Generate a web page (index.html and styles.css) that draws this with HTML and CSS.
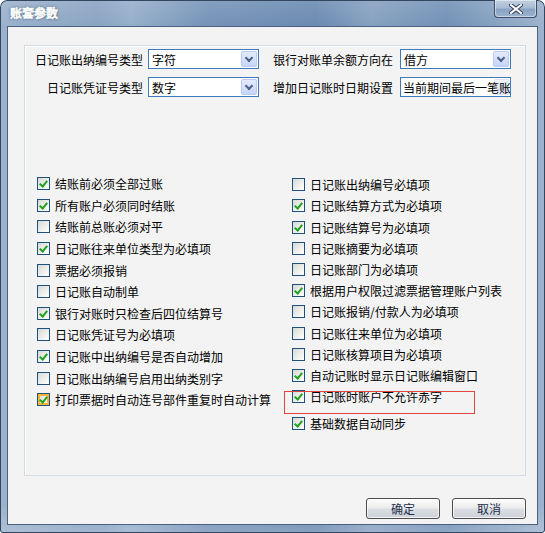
FILE: index.html
```html
<!DOCTYPE html>
<html lang="zh-CN">
<head>
    <meta charset="UTF-8">
    <title>账套参数</title>
    <link rel="stylesheet" href="styles.css">
</head>
<body>

    <!-- Dialog window -->
    <div class="window">
        <div class="titlebar">
            <span class="title">账套参数</span>
            <button class="close-btn">
                <svg width="14" height="10" viewBox="0 0 14 10">
                    <path d="M2 1 L12 9 M12 1 L2 9" stroke="#33445c" stroke-width="4" stroke-linecap="square"/>
                    <path d="M2 1 L12 9 M12 1 L2 9" stroke="#fff" stroke-width="2" stroke-linecap="square"/>
                </svg>
            </button>
        </div>

        <div class="client">
            <div class="group">
                <!-- Combo fields -->
                <div class="fields">
                    <label>日记账出纳编号类型</label>
                    <div class="combo"><span>字符</span><i class="drop"></i></div>
                    <label class="lbl-right">银行对账单余额方向在</label>
                    <div class="combo"><span>借方</span><i class="drop"></i></div>

                    <label>日记账凭证号类型</label>
                    <div class="combo"><span>数字</span><i class="drop"></i></div>
                    <label class="lbl-right">增加日记账时日期设置</label>
                    <div class="combo wide"><span>当前期间最后一笔账</span><i class="drop"></i></div>
                </div>

                <!-- Options -->
                <div class="checks">
                    <div class="col col-left">
                        <div class="chk"><i class="box on"></i>结账前必须全部过账</div>
                        <div class="chk"><i class="box on"></i>所有账户必须同时结账</div>
                        <div class="chk"><i class="box"></i>结账前总账必须对平</div>
                        <div class="chk"><i class="box on"></i>日记账往来单位类型为必填项</div>
                        <div class="chk"><i class="box"></i>票据必须报销</div>
                        <div class="chk"><i class="box"></i>日记账自动制单</div>
                        <div class="chk"><i class="box on"></i>银行对账时只检查后四位结算号</div>
                        <div class="chk"><i class="box"></i>日记账凭证号为必填项</div>
                        <div class="chk"><i class="box on"></i>日记账中出纳编号是否自动增加</div>
                        <div class="chk"><i class="box"></i>日记账出纳编号启用出纳类别字</div>
                        <div class="chk"><i class="box on hot"></i>打印票据时自动连号部件重复时自动计算</div>
                    </div>
                    <div class="col col-right">
                        <div class="chk"><i class="box"></i>日记账出纳编号必填项</div>
                        <div class="chk"><i class="box on"></i>日记账结算方式为必填项</div>
                        <div class="chk"><i class="box on"></i>日记账结算号为必填项</div>
                        <div class="chk"><i class="box"></i>日记账摘要为必填项</div>
                        <div class="chk"><i class="box"></i>日记账部门为必填项</div>
                        <div class="chk"><i class="box on"></i>根据用户权限过滤票据管理账户列表</div>
                        <div class="chk"><i class="box"></i>日记账报销/付款人为必填项</div>
                        <div class="chk"><i class="box"></i>日记账往来单位为必填项</div>
                        <div class="chk"><i class="box"></i>日记账核算项目为必填项</div>
                        <div class="chk"><i class="box on"></i>自动记账时显示日记账编辑窗口</div>
                        <div class="chk"><i class="box on"></i>日记账时账户不允许赤字</div>
                        <div class="chk last"><i class="box on"></i>基础数据自动同步</div>
                    </div>
                </div>

                <!-- red marker drawn over the option -->
                <div class="highlight"></div>
            </div>

            <div class="buttons">
                <button class="btn">确定</button>
                <button class="btn">取消</button>
            </div>
        </div>
    </div>

</body>
</html>
```

FILE: styles.css
```css
/* Reset */
html, body {
    margin: 0;
    padding: 0;
    background: #fff;
    font-family: "Noto Sans CJK SC", "Liberation Sans", sans-serif;
    font-size: 12px;
    color: #000;
}

/* Window frame */
.window {
    width: 545px;
    height: 533px;
    box-sizing: border-box;
    padding: 0 7px 8px 7px;
    border-radius: 7px 7px 3px 3px;
    background:
        linear-gradient(180deg, rgba(255,255,255,0.12) 0, rgba(255,255,255,0) 26px, rgba(255,255,255,0) 505px, rgba(255,255,255,0.2) 533px),
        linear-gradient(90deg, #9cb2cc 0%, #89a3c2 18%, #95aecb 24%, #7593b7 38%, #6a8ab0 58%, #86a0c0 68%, #7191b5 82%, #9db3cd 100%);
    box-shadow: inset 0 0 0 1px #33465f;
}

.titlebar {
    height: 26px;
    display: flex;
    justify-content: space-between;
    align-items: flex-start;
}

.title {
    padding: 6px 0 0 3px;
    color: #fff;
    font-weight: bold;
    font-size: 12px;
    line-height: 14px;
    -webkit-text-stroke: 0.5px #fff;
    text-shadow: 0 0 3px #2f4966, 0 0 1px #2f4966;
}

.close-btn {
    width: 43px;
    height: 18px;
    margin: 0 1px 0 0;
    padding: 0;
    border: 1px solid #3b4f6b;
    border-top: none;
    border-radius: 0 0 4px 4px;
    background: linear-gradient(180deg, #c2d0e1 0%, #a9bcd3 45%, #8aa3c2 55%, #9db3cd 100%);
    box-shadow: inset 0 0 0 1px rgba(255,255,255,0.45);
    display: flex;
    align-items: center;
    justify-content: center;
}

/* Client area */
.client {
    height: 499px;
    box-sizing: border-box;
    border: 1px solid #4a6182;
    background: #f3f3f3;
}

.group {
    position: relative;
    width: 502px;
    height: 431px;
    box-sizing: border-box;
    margin: 18px 0 0 16px;
    border: 1px solid #d3dce4;
    box-shadow: inset 1px 1px 0 #fff;
}

/* Combo rows */
.fields {
    display: grid;
    grid-template-columns: 108px 111px 131px 111px;
    grid-template-rows: 20px 20px;
    column-gap: 5px;
    row-gap: 8px;
    margin: 3px 0 0 10px;
    align-items: center;
}

.fields label {
    text-align: right;
    white-space: nowrap;
}

.fields .lbl-right {
    padding-right: 2px;
}

.combo {
    height: 20px;
    box-sizing: border-box;
    border: 1px solid #3d7bbd;
    background: #fff;
    display: flex;
    align-items: center;
    overflow: hidden;
}

.combo span {
    flex: 1;
    padding-left: 3px;
    white-space: nowrap;
}

.drop {
    width: 16px;
    height: 16px;
    box-sizing: border-box;
    margin: 1px;
    border: 1px solid #b9caf2;
    border-radius: 2px;
    background: linear-gradient(180deg, #e3eafd 0%, #c6d5fa 100%);
    position: relative;
}

.drop::after {
    content: '';
    position: absolute;
    left: 4px;
    top: 3px;
    width: 4px;
    height: 4px;
    border: solid #4d6185;
    border-width: 0 2px 2px 0;
    transform: rotate(45deg);
}

.combo.wide span {
    flex: none;
    padding-left: 2px;
    position: relative;
    z-index: 1;
}

.combo.wide .drop {
    margin-left: -17px;
    opacity: 0.5;
}

.combo.wide .drop::after {
    display: none;
}

/* Check box columns */
.checks {
    display: flex;
    margin: 76px 0 0 12px;
}

.col-left {
    width: 255px;
}

.col-left .chk {
    height: 21.6px;
}

.col-right {
    margin-top: 1.2px;
}

.col-right .chk {
    height: 21.2px;
}

.col-right .chk.last {
    margin-top: 5.8px;
}

.chk {
    display: flex;
    align-items: center;
    gap: 5px;
    white-space: nowrap;
}

.box {
    width: 13px;
    height: 13px;
    box-sizing: border-box;
    border: 1px solid #1c5180;
    background: linear-gradient(135deg, #d8d8d2 0%, #f4f4f2 70%, #fff 100%);
    position: relative;
    flex: none;
}

.box.on::after {
    content: '';
    position: absolute;
    left: 3px;
    top: 1px;
    width: 3px;
    height: 6px;
    border: solid #21a121;
    border-width: 0 2px 2px 0;
    transform: rotate(40deg);
}

.box.hot {
    box-shadow: inset 0 0 0 2px #f8b43a;
}

/* Red marker */
.highlight {
    position: absolute;
    left: 259px;
    top: 345px;
    width: 189px;
    height: 21px;
    border: 1px solid #e0463f;
}

/* Dialog buttons */
.buttons {
    display: flex;
    justify-content: flex-end;
    gap: 12px;
    margin: 22px 11px 0 0;
}

.btn {
    width: 74px;
    height: 21px;
    padding: 0;
    border: 1px solid #4c4c4c;
    border-radius: 3px;
    background: linear-gradient(180deg, #fdfdfd 0%, #ececec 45%, #dadde2 55%, #cdd2d8 100%);
    box-shadow: inset 0 0 0 1px rgba(255,255,255,0.7);
    font-family: "Noto Sans CJK SC", "Liberation Sans", sans-serif;
    font-size: 12px;
    color: #1e2f4d;
}
```
